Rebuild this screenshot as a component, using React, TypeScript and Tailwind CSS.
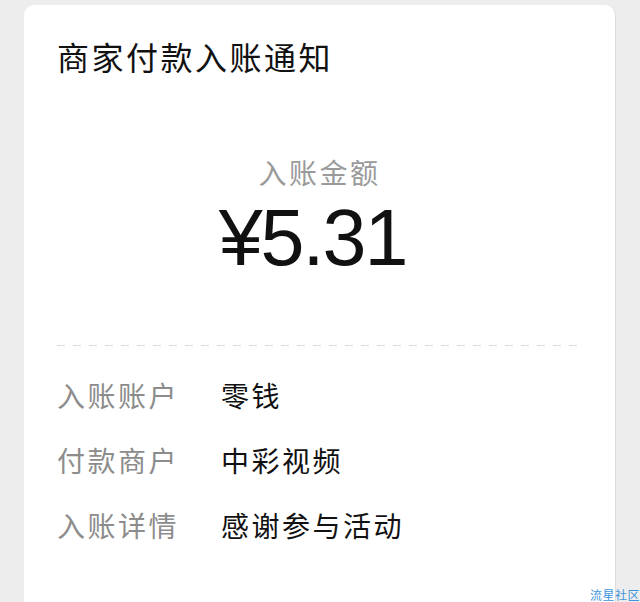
export default function App() {
  const rows = [
    { label: '入账账户', value: '零钱' },
    { label: '付款商户', value: '中彩视频' },
    { label: '入账详情', value: '感谢参与活动' },
  ];

  return (
    <div
      className="relative h-[602px] w-[640px] overflow-hidden bg-[#ededed]"
      style={{ fontFamily: '"Noto Sans CJK SC", "Noto Sans", sans-serif' }}
    >
      {/* Card */}
      <div className="ml-[24px] mt-[5px] h-[640px] w-[592px] rounded-[10px] border-r border-[#dcdcdc] bg-white pl-[33px] pt-[31px]">
        <div className="flex h-[40px] items-center text-[32px] tracking-[2.5px] text-[#111]">
          商家付款入账通知
        </div>

        <div className="mt-[79px] flex h-[34px] items-center justify-center pr-[33px] text-[28px] tracking-[2.5px] text-[#9a9a9a]">
          入账金额
        </div>
        <div
          className="mt-[4px] flex h-[90px] items-center justify-center pr-[47px] text-[79px] tracking-[-2px] text-[#111]"
          style={{ fontFamily: '"Liberation Sans", Arial, sans-serif' }}
        >
          ¥5.31
        </div>

        {/* Dashed divider */}
        <div className="mt-[62px] h-px w-[520px] bg-[repeating-linear-gradient(to_right,#dadada_0_8px,transparent_8px_16px)]" />

        <div className="mt-[16px]">
          {rows.map((row) => (
            <div key={row.label} className="flex h-[65px] items-center text-[28px] tracking-[2.5px]">
              <span className="w-[164px] text-[#8c8c8c]">{row.label}</span>
              <span className="text-[#111]">{row.value}</span>
            </div>
          ))}
        </div>
      </div>

      {/* Watermark */}
      <div className="absolute bottom-0 right-0 text-[12px] leading-[14px] tracking-[0.5px] text-[#3f95dc]">
        流星社区
      </div>
    </div>
  );
}
